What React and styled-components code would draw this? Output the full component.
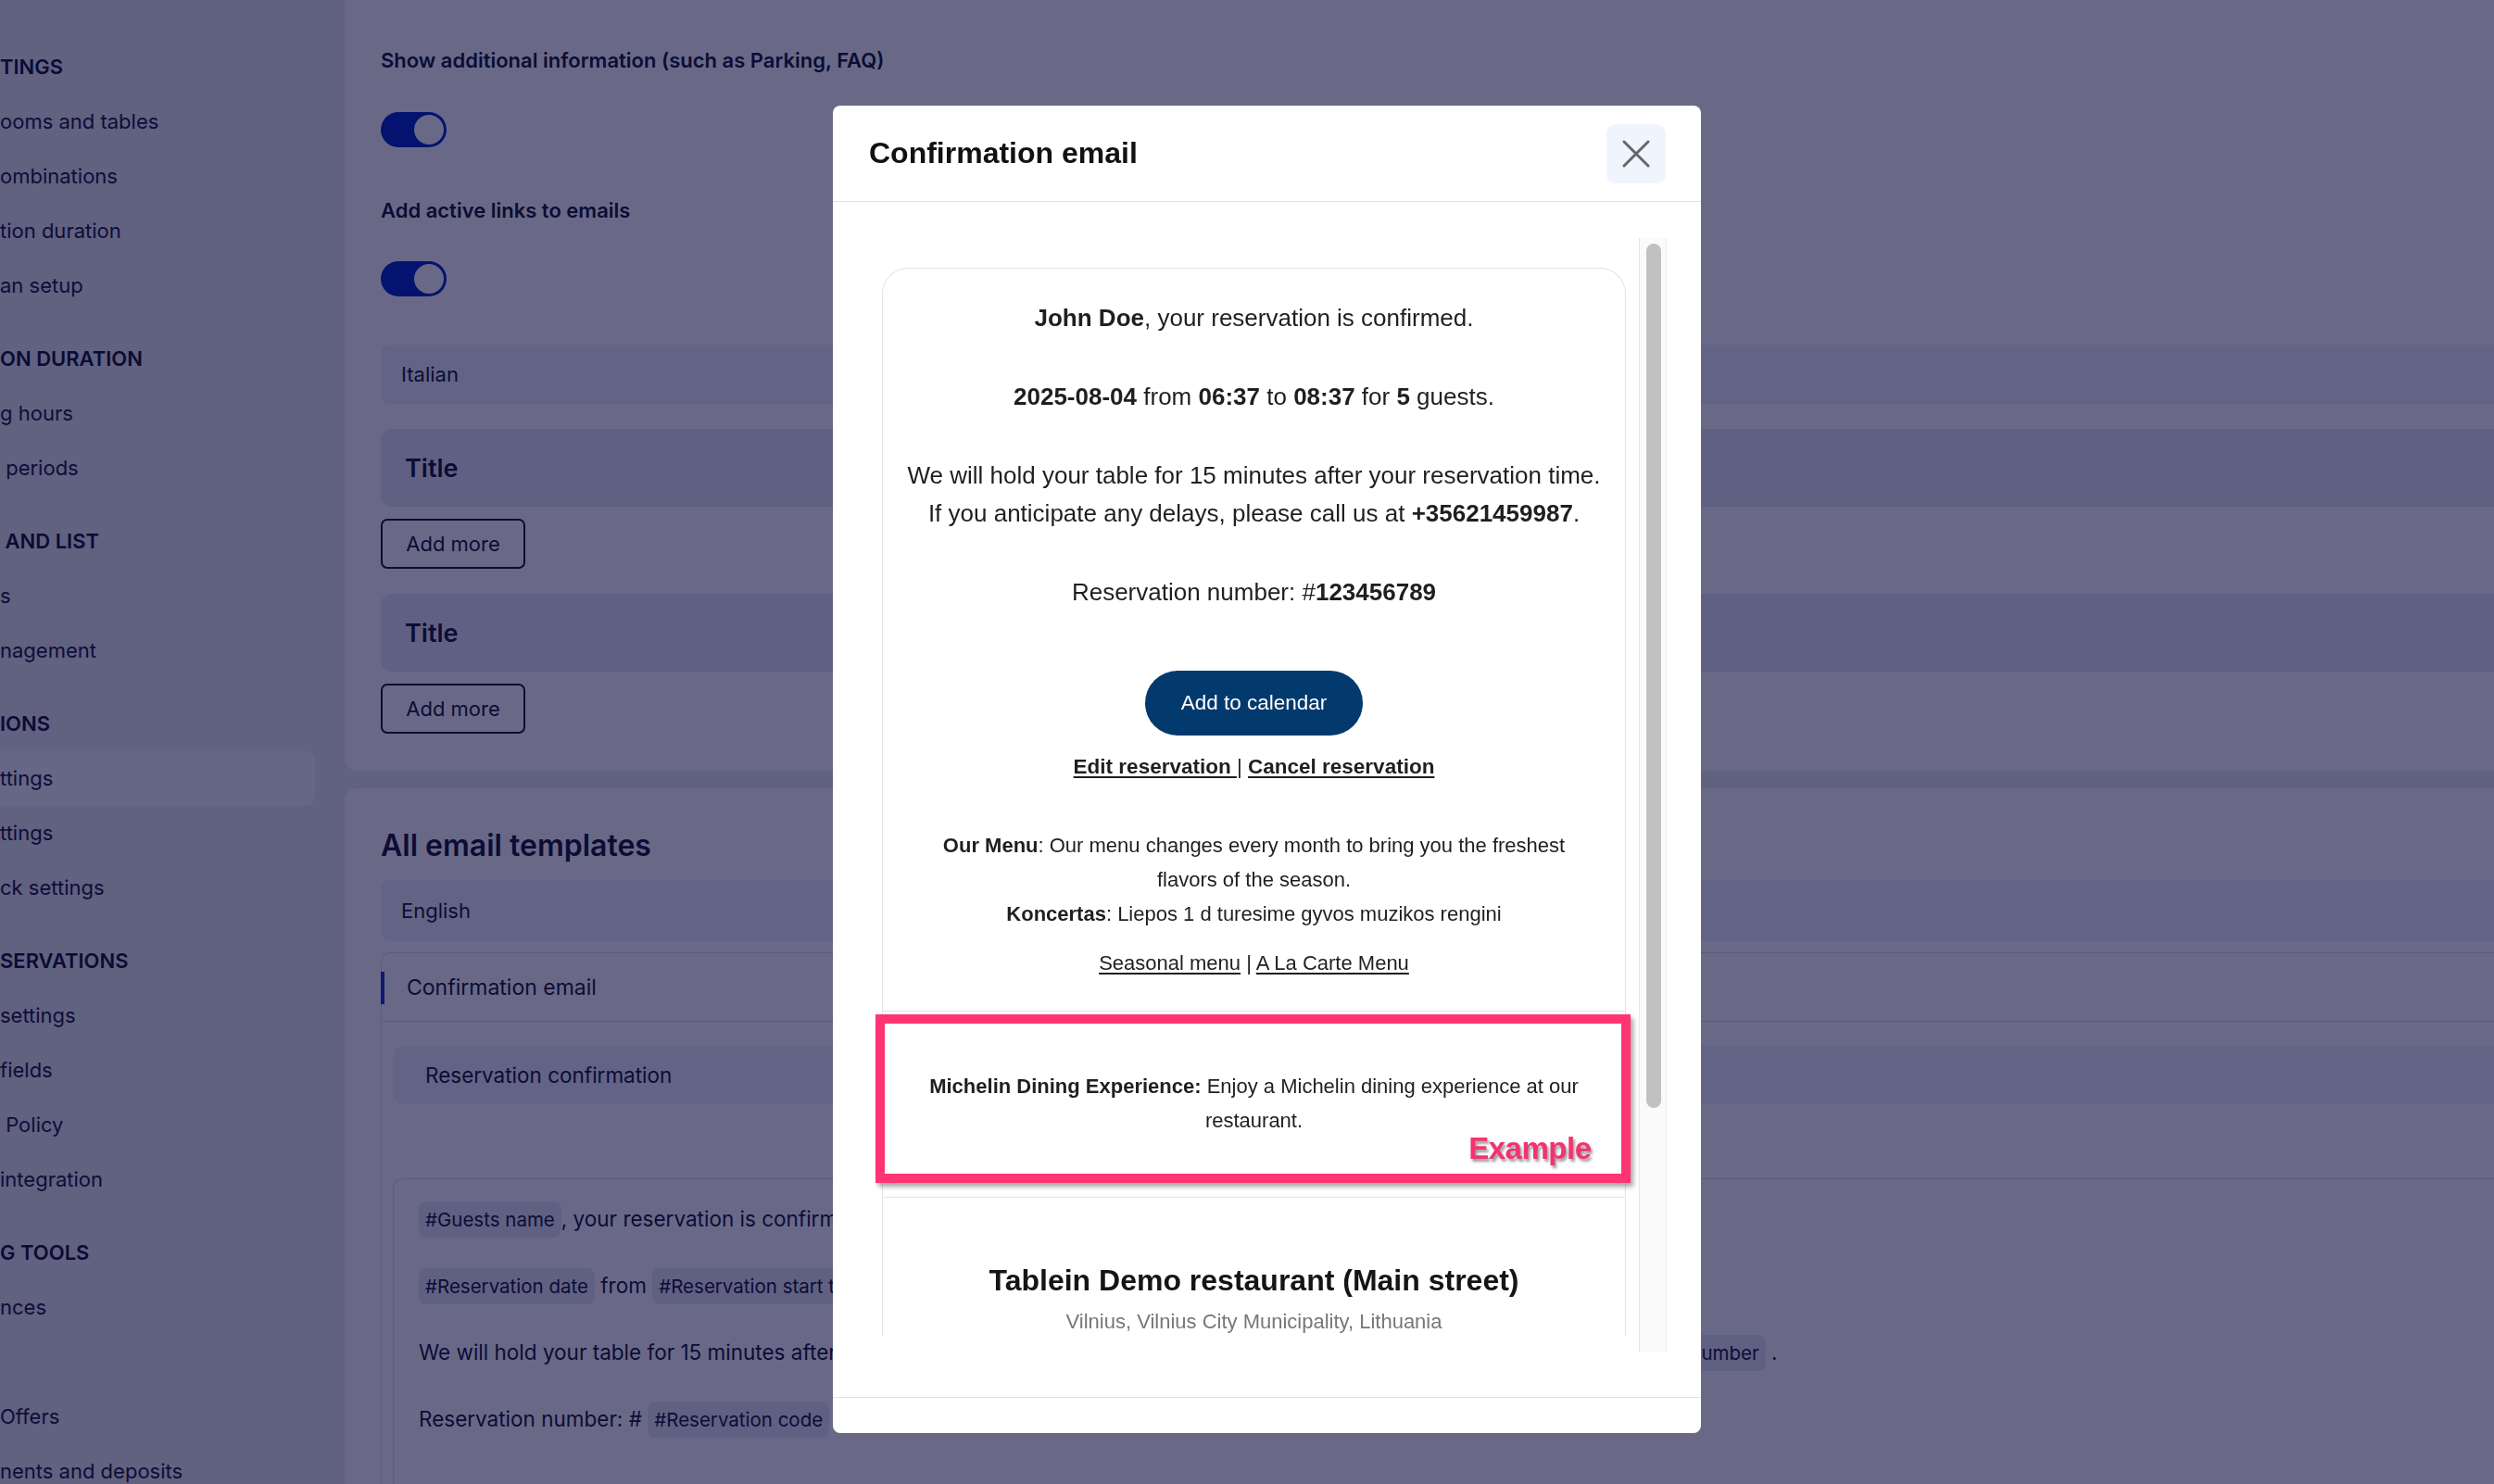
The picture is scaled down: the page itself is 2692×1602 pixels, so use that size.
import React from 'react'
import styled, { createGlobalStyle } from 'styled-components'

const GlobalStyle = createGlobalStyle`
  html, body {
    margin: 0;
    padding: 0;
  }
  body {
    font-family: Inter, 'Noto Sans', sans-serif;
    background: #ebebef;
    color: #1d1d38;
    overflow: hidden;
  }
  * {
    box-sizing: border-box;
  }
`

const Page = styled.div`
  display: flex;
  width: 100%;
  height: 1602px;
  overflow: hidden;
`

/* ---------- sidebar ---------- */

const Sidebar = styled.nav`
  width: 372px;
  flex-shrink: 0;
  padding-top: 43px;
`
const SideHeader = styled.div`
  height: 59px;
  line-height: 59px;
  margin-top: ${(p) => (p.$first ? 0 : 20)}px;
  font-size: 22px;
  font-weight: 600;
  white-space: pre;
  color: #1b1b36;
`
const SideItem = styled.div`
  height: 59px;
  line-height: 59px;
  width: 340px;
  font-size: 22px;
  white-space: pre;
  color: #23233f;
  border-radius: 0 10px 10px 0;
  background: ${(p) => (p.$active ? '#f7f7fa' : 'transparent')};
`

/* ---------- main ---------- */

const Main = styled.main`
  flex: 1;
  display: flex;
  flex-direction: column;
  gap: 19px;
`
const Card = styled.section`
  background: #ffffff;
  padding: ${(p) => p.$padding};
  border-radius: ${(p) => p.$radius};
  flex: ${(p) => (p.$grow ? 1 : 'none')};
`
const FieldLabel = styled.div`
  font-size: 22px;
  font-weight: 600;
  line-height: 32px;
  margin-top: ${(p) => p.$mt || 0}px;
`
const Toggle = styled.div`
  position: relative;
  width: 71px;
  height: 38px;
  border-radius: 19px;
  background: #0a2fc7;
  margin-top: ${(p) => p.$mt}px;

  &::after {
    content: '';
    position: absolute;
    right: 3px;
    top: 3px;
    width: 32px;
    height: 32px;
    border-radius: 50%;
    background: #ffffff;
  }
`
const LangRow = styled.div`
  height: ${(p) => p.$h || 64}px;
  margin-top: ${(p) => p.$mt}px;
  display: flex;
  align-items: center;
  padding-left: 22px;
  font-size: 22px;
  background: #f0f2f9;
  border-radius: 10px 0 0 10px;
`
const TitleBox = styled.div`
  height: 84px;
  margin-top: 27px;
  display: flex;
  align-items: center;
  padding-left: 26px;
  font-size: 27px;
  font-weight: 600;
  background: #e6e9f3;
  border-radius: 12px 0 0 12px;
`
const OutlineButton = styled.button`
  display: block;
  width: 156px;
  height: 54px;
  margin-top: 13px;
  font-family: inherit;
  font-size: 22px;
  color: #1d1d38;
  background: #ffffff;
  border: 2px solid #1d1d38;
  border-radius: 7px;
`
const SectionTitle = styled.h2`
  margin: 0;
  font-size: 32px;
  line-height: 40px;
  font-weight: 600;
`
const TemplatePanel = styled.div`
  margin-top: 12px;
  border-top: 1.5px solid #d9dbe6;
  border-left: 1.5px solid #d9dbe6;
  border-radius: 10px 0 0 0;
  min-height: 700px;
`
const TabRow = styled.div`
  position: relative;
  height: 74px;
  display: flex;
  align-items: center;
  padding-left: 27px;
  font-size: 23px;
  border-bottom: 1.5px solid #d9dbe6;

  &::before {
    content: '';
    position: absolute;
    left: -1.5px;
    top: 20px;
    width: 4px;
    height: 35px;
    background: #1f3fd0;
  }
`
const SubjectBox = styled.div`
  margin: 26px 0 0 13px;
  height: 63px;
  display: flex;
  align-items: center;
  padding-left: 34px;
  font-size: 22.5px;
  background: #eff1f9;
  border-radius: 10px 0 0 10px;
`
const Editor = styled.div`
  margin: 80px 0 0 12px;
  padding: 23px 0 0 27px;
  border-top: 1.5px solid #d9dbe6;
  border-left: 1.5px solid #d9dbe6;
  border-radius: 10px 0 0 0;
  min-height: 400px;
`
const EditorLine = styled.div`
  height: 39px;
  line-height: 39px;
  margin-bottom: 33px;
  font-size: 22.5px;
  white-space: pre;
`
const Chip = styled.span`
  display: inline-block;
  padding: 0 7px;
  font-size: 20.5px;
  background: #e8eaf3;
  border-radius: 8px;
`

/* ---------- modal ---------- */

const Overlay = styled.div`
  position: fixed;
  inset: 0;
  background: rgba(0, 0, 51, 0.59);
  display: flex;
  align-items: flex-start;
  padding: 114px 0 0 899px;
`
const Modal = styled.div`
  width: 937px;
  height: 1433px;
  background: #ffffff;
  border-radius: 8px;
  display: flex;
  flex-direction: column;
  overflow: hidden;
`
const ModalHeader = styled.header`
  height: 104px;
  flex-shrink: 0;
  display: flex;
  align-items: center;
  justify-content: space-between;
  padding: 0 38px 0 39px;
  border-bottom: 1.5px solid #dfe1ea;
`
const ModalTitle = styled.h1`
  margin: 0;
  font-family: 'Liberation Sans', Arial, sans-serif;
  font-size: 32px;
  font-weight: 700;
  color: #111111;
`
const CloseButton = styled.button`
  width: 64px;
  height: 64px;
  display: grid;
  place-items: center;
  background: #f0f4fd;
  border: none;
  border-radius: 10px;
  padding: 0;
`
const ModalBody = styled.div`
  flex: 1;
  min-height: 0;
  display: flex;
  padding: 39px 37px 48px 31px;
`
const ScrollViewport = styled.div`
  flex: 1;
  min-width: 0;
  overflow: hidden;
  padding: 32px 14px 0 22px;
`
const ScrollTrack = styled.div`
  width: 30px;
  flex-shrink: 0;
  padding: 6px 5px 0 7px;
  background: #fafafa;
  border-left: 1px solid #e6e6e6;
  border-right: 1px solid #ededed;
`
const ScrollThumb = styled.div`
  height: 933px;
  border-radius: 8px;
  background: #c1c1c1;
`
const ModalFooter = styled.footer`
  height: 39px;
  flex-shrink: 0;
  border-top: 1.5px solid #dfe1ea;
`

/* ---------- email preview ---------- */

const EmailCard = styled.div`
  border: 1.5px solid #e4e4e4;
  border-bottom: none;
  border-radius: 28px 28px 0 0;
  text-align: center;
  font-family: 'Liberation Sans', Arial, Helvetica, sans-serif;
  color: #1f1f1f;
`
const EmailSection = styled.div`
  position: relative;
  padding: ${(p) => p.$padding};
  border-bottom: ${(p) => (p.$last ? 'none' : '1.5px solid #e4e4e4')};
`
const Para = styled.p`
  margin: 0 0 ${(p) => (p.$mb === undefined ? 44 : p.$mb)}px;
  font-size: 26px;
  line-height: 41px;
  white-space: nowrap;
`
const CalendarButton = styled.a`
  display: inline-block;
  height: 70px;
  line-height: 70px;
  padding: 0 39px;
  border-radius: 35px;
  background: #033a6d;
  color: #ffffff;
  font-size: 22.5px;
  text-decoration: none;
`
const ActionLinks = styled.div`
  margin-top: 16px;
  font-size: 22.5px;
  line-height: 36px;

  a {
    color: #1f1f1f;
    font-weight: 700;
    text-decoration: underline;
    text-underline-offset: 3px;
  }
`
const InfoText = styled.div`
  max-width: ${(p) => p.$max || 710}px;
  margin: ${(p) => p.$mt || 0}px auto 0;
  font-size: 22px;
  line-height: 37px;

  b {
    font-weight: 700;
  }
  a {
    color: #1f1f1f;
    text-decoration: underline;
    text-underline-offset: 3px;
  }
`
const HighlightFrame = styled.div`
  position: absolute;
  top: 3px;
  left: -8.5px;
  right: -5.5px;
  bottom: 15px;
  border: 10px solid #ff3573;
  box-shadow: 3px 4px 5px rgba(0, 0, 0, 0.35);
  pointer-events: none;
`
const ExampleTag = styled.span`
  position: absolute;
  right: 32px;
  bottom: 11px;
  font-family: 'Liberation Sans', Arial, sans-serif;
  font-size: 33px;
  font-weight: 700;
  letter-spacing: -0.5px;
  line-height: 1;
  color: #f2336f;
  text-shadow: 2px 3px 3px rgba(0, 0, 0, 0.4);
`
const RestaurantName = styled.h3`
  margin: 0;
  font-size: 32px;
  line-height: 44px;
  font-weight: 700;
  color: #151515;
`
const RestaurantAddress = styled.div`
  margin-top: 7px;
  font-size: 22px;
  line-height: 32px;
  color: #777777;
`

const sidebarGroups = [
  { title: 'TINGS', items: ['ooms and tables', 'ombinations', 'tion duration', 'an setup'] },
  { title: 'ON DURATION', items: ['g hours', ' periods'] },
  { title: ' AND LIST', items: ['s', 'nagement'] },
  { title: 'IONS', items: ['ttings', 'ttings', 'ck settings'], active: 0 },
  { title: 'SERVATIONS', items: ['settings', 'fields', ' Policy', 'integration'] },
  { title: 'G TOOLS', items: ['nces', '', 'Offers', 'nents and deposits'] },
]

function CloseIcon() {
  return (
    <svg width='30' height='30' viewBox='0 0 30 30' fill='none'>
      <path d='M2 2 28 28M28 2 2 28' stroke='#666666' strokeWidth='3' strokeLinecap='round' />
    </svg>
  )
}

function ConfirmationModal() {
  return (
    <Overlay>
      <Modal>
        <ModalHeader>
          <ModalTitle>Confirmation email</ModalTitle>
          <CloseButton aria-label='Close'>
            <CloseIcon />
          </CloseButton>
        </ModalHeader>
        <ModalBody>
          <ScrollViewport>
            <EmailCard>
              <EmailSection $padding='33px 24px 33px'>
                <Para>
                  <b>John Doe</b>, your reservation is confirmed.
                </Para>
                <Para>
                  <b>2025-08-04</b> from <b>06:37</b> to <b>08:37</b> for <b>5</b> guests.
                </Para>
                <Para>
                  We will hold your table for 15 minutes after your reservation time.
                  <br />
                  If you anticipate any delays, please call us at <b>+35621459987</b>.
                </Para>
                <Para $mb={64}>
                  Reservation number: #<b>123456789</b>
                </Para>
                <CalendarButton>Add to calendar</CalendarButton>
                <ActionLinks>
                  <a>Edit reservation </a>| <a>Cancel reservation</a>
                </ActionLinks>
                <InfoText $mt={48}>
                  <b>Our Menu</b>: Our menu changes every month to bring you the freshest flavors of the
                  season.
                </InfoText>
                <InfoText>
                  <b>Koncertas</b>: Liepos 1 d turesime gyvos muzikos rengini
                </InfoText>
                <InfoText $mt={16}>
                  <a>Seasonal menu</a> | <a>A La Carte Menu</a>
                </InfoText>
              </EmailSection>
              <EmailSection $padding='62px 24px 64px'>
                <InfoText $max={740}>
                  <b>Michelin Dining Experience:</b> Enjoy a Michelin dining experience at our restaurant.
                </InfoText>
                <HighlightFrame>
                  <ExampleTag>Example</ExampleTag>
                </HighlightFrame>
              </EmailSection>
              <EmailSection $padding='67px 24px 0' $last>
                <RestaurantName>Tablein Demo restaurant (Main street)</RestaurantName>
                <RestaurantAddress>Vilnius, Vilnius City Municipality, Lithuania</RestaurantAddress>
              </EmailSection>
            </EmailCard>
          </ScrollViewport>
          <ScrollTrack>
            <ScrollThumb />
          </ScrollTrack>
        </ModalBody>
        <ModalFooter />
      </Modal>
    </Overlay>
  )
}

export default function App() {
  return (
    <>
      <GlobalStyle />
      <Page>
        <Sidebar>
          {sidebarGroups.map((group, gi) => (
            <div key={gi}>
              <SideHeader $first={gi === 0}>{group.title}</SideHeader>
              {group.items.map((item, ii) => (
                <SideItem key={ii} $active={group.active === ii}>
                  {item}
                </SideItem>
              ))}
            </div>
          ))}
        </Sidebar>

        <Main>
          <Card $padding='49px 0 40px 39px' $radius='0 0 0 14px'>
            <FieldLabel>Show additional information (such as Parking, FAQ)</FieldLabel>
            <Toggle $mt={40} />
            <FieldLabel $mt={52}>Add active links to emails</FieldLabel>
            <Toggle $mt={39} />
            <LangRow $mt={52}>Italian</LangRow>
            <TitleBox>Title</TitleBox>
            <OutlineButton>Add more</OutlineButton>
            <TitleBox>Title</TitleBox>
            <OutlineButton>Add more</OutlineButton>
          </Card>

          <Card $padding='42px 0 0 39px' $radius='14px 0 0 0' $grow>
            <SectionTitle>All email templates</SectionTitle>
            <LangRow $mt={17} $h={66}>
              English
            </LangRow>
            <TemplatePanel>
              <TabRow>Confirmation email</TabRow>
              <SubjectBox>Reservation confirmation</SubjectBox>
              <Editor>
                <EditorLine>
                  <Chip>#Guests name</Chip>, your reservation is confirmed.
                </EditorLine>
                <EditorLine>
                  <Chip>#Reservation date</Chip> from <Chip>#Reservation start time</Chip> to{' '}
                  <Chip>#Reservation end time</Chip> for <Chip>#Number of guests</Chip> guests.
                </EditorLine>
                <EditorLine>
                  We will hold your table for 15 minutes after your reservation time. If you anticipate
                  any delays, please call us at <Chip>#Restaurant phone number</Chip> .
                </EditorLine>
                <EditorLine>
                  Reservation number: # <Chip>#Reservation code</Chip>
                </EditorLine>
              </Editor>
            </TemplatePanel>
          </Card>
        </Main>
      </Page>
      <ConfirmationModal />
    </>
  )
}
